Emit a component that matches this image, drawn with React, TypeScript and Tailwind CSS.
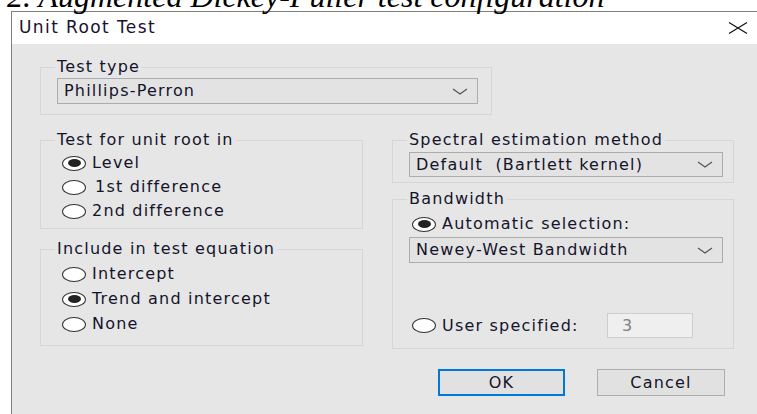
import type { ReactNode } from 'react';

const ui = "font-['DejaVu_Sans',Verdana,sans-serif]";

function Chevron() {
  return (
    <svg width="16" height="7" viewBox="0 0 16 7" className="shrink-0">
      <path d="M1 1 L8 6 L15 1" fill="none" stroke="#555" strokeWidth="1.2" />
    </svg>
  );
}

function Select({ value, className = '' }: { value: string; className?: string }) {
  return (
    <div
      className={`flex items-center justify-between border border-[#adadad] bg-[#e3e3e3] pl-[6px] pr-[9px] ${className}`}
    >
      <span className="whitespace-pre">{value}</span>
      <Chevron />
    </div>
  );
}

function Radio({ label, checked = false, className = '' }: { label: string; checked?: boolean; className?: string }) {
  return (
    <div className={`flex h-[20px] items-center ${className}`}>
      <span className="flex h-[15px] w-[24px] shrink-0 items-center justify-center rounded-[50%] border border-[#333] bg-white">
        {checked && <span className="h-[8px] w-[13px] rounded-[50%] bg-[#222]" />}
      </span>
      <span className="ml-[6px] whitespace-pre">{label}</span>
    </div>
  );
}

function Group({ title, className = '', children }: { title: string; className?: string; children: ReactNode }) {
  return (
    <fieldset className={`border border-[#d6d6d6] pl-[16px] ${className}`}>
      <legend className="-ml-[2px] px-[2px] leading-[16px]">{title}</legend>
      {children}
    </fieldset>
  );
}

export default function App() {
  return (
    <div className={`h-[414px] w-[757px] overflow-hidden bg-white ${ui} text-[16px] tracking-[1.2px] text-[#14142b]`}>
      <div className="-mt-[20px] h-[31px] whitespace-nowrap pl-[7px] font-['Liberation_Serif',serif] text-[32px] italic leading-none tracking-normal text-black">
        2. Augmented Dickey-Fuller test configuration
      </div>

      <div className="ml-[11px] border-l border-t border-[#7f7f7f]">
        {/* title bar */}
        <div className="flex h-[32px] items-center justify-between bg-white pl-[7px] pr-[9px]">
          <span className="text-[17px] tracking-[1.4px] text-[#1a1030]">Unit Root Test</span>
          <svg width="20" height="12" viewBox="0 0 20 12">
            <path d="M1 0.5 L19 11.5 M19 0.5 L1 11.5" stroke="#111" strokeWidth="1.2" />
          </svg>
        </div>

        {/* body */}
        <div className="h-[400px] bg-[#e6e6e6] pl-[28px] pt-[15px]">
          <Group title="Test type" className="w-[452px] pb-[10px] pr-[13px]">
            <Select value="Phillips-Perron" className="mt-[3px] h-[26px]" />
          </Group>

          <div className="mt-[17px] flex gap-[29px]">
            <div className="flex w-[323px] flex-col">
              <Group title="Test for unit root in" className="pb-[7px] pt-[5px]">
                <div className="flex flex-col gap-[4px] pl-[5px]">
                  <Radio label="Level" checked />
                  <Radio label="1st difference" className="[&>span:last-child]:ml-[9px]" />
                  <Radio label="2nd difference" />
                </div>
              </Group>
              <Group title="Include in test equation" className="mt-[12px] pb-[11px] pt-[7px]">
                <div className="flex flex-col gap-[5px] pl-[5px]">
                  <Radio label="Intercept" />
                  <Radio label="Trend and intercept" checked />
                  <Radio label="None" />
                </div>
              </Group>
            </div>

            <div className="flex w-[342px] flex-col">
              <Group title="Spectral estimation method" className="pb-[5px] pr-[10px] pt-[4px]">
                <Select value="Default  (Bartlett kernel)" className="h-[25px]" />
              </Group>
              <Group title="Bandwidth" className="mt-[8px] pb-[10px] pr-[10px] pt-[7px]">
                <Radio label="Automatic selection:" checked className="pl-[3px]" />
                <Select value="Newey-West Bandwidth" className="mt-[3px] h-[26px]" />
                <div className="mt-[50px] flex h-[25px] items-center pl-[3px]">
                  <Radio label="User specified:" />
                  <div className="ml-auto mr-[30px] flex h-[25px] w-[86px] items-center border border-[#cdcdcd] bg-[#efefef] pl-[14px] text-[#808080]">
                    3
                  </div>
                </div>
              </Group>
              <div className="mr-[9px] mt-[20px] flex justify-end gap-[32px]">
                <button className="h-[27px] w-[127px] border-2 border-[#0078d7] bg-[#e1e1e1]">OK</button>
                <button className="h-[27px] w-[128px] border border-[#adadad] bg-[#e1e1e1]">Cancel</button>
              </div>
            </div>
          </div>
        </div>
      </div>
    </div>
  );
}
